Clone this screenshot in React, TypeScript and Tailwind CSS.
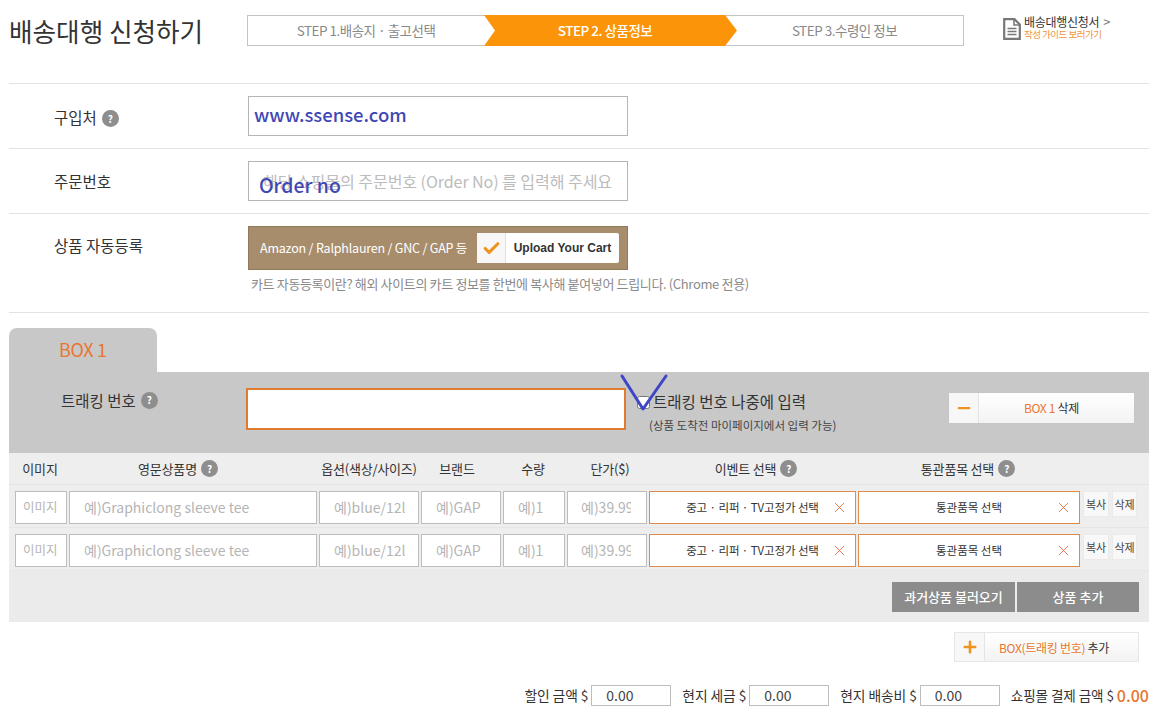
import { X, Check, Minus, Plus } from "lucide-react"

const font = "font-['Noto_Sans_CJK_KR','Noto_Sans',sans-serif]"

function Help({ size = "w-4 h-4 text-[10px]" }: { size?: string }) {
  return (
    <span className={`inline-flex items-center justify-center rounded-full bg-[#8e8e8e] text-white font-bold ${size}`}>?</span>
  )
}

function GuideIcon() {
  return (
    <svg width="18" height="22" viewBox="0 0 18 22" fill="none">
      <path d="M1.2 1.2H11.5L16.8 6.5V20.8H1.2Z" stroke="#777" strokeWidth="2.2" fill="#fff" />
      <path d="M11 1.5V7H16.5" stroke="#777" strokeWidth="1.6" />
      <path d="M4.5 10.5H13.5M4.5 13.5H13.5M4.5 16.5H13.5" stroke="#777" strokeWidth="1.6" />
    </svg>
  )
}

function Row({ label, help, h, top = "pt-[21px]", children }: { label: string; help?: boolean; h: string; top?: string; children: React.ReactNode }) {
  return (
    <div className={`flex border-b border-[#e3e3e3] ${h}`}>
      <div className={`w-[239px] pl-[45px] ${top} flex items-start gap-[5px] text-[15.5px] leading-[24px] text-[#333] shrink-0`}>
        <span>{label}</span>
        {help && <span className="mt-[5px] flex"><Help size="w-[17px] h-[17px] text-[10px]" /></span>}
      </div>
      <div className="pt-[12px]">{children}</div>
    </div>
  )
}

const colHeads = [
  { t: "이미지", w: "w-[50px]" },
  { t: "영문상품명", w: "w-[256px] pr-[30px]", help: true },
  { t: "옵션(색상/사이즈)", w: "w-[96px]" },
  { t: "브랜드", w: "w-[80px]" },
  { t: "수량", w: "w-[72px]" },
  { t: "단가($)", w: "w-[82px]" },
  { t: "이벤트 선택", w: "w-[210px]", help: true },
  { t: "통관품목 선택", w: "w-[214px]", help: true },
]

const cellInput =
  "h-[33px] border border-[#bdbdbd] bg-white text-[14px] text-[#555] placeholder:text-[#b5b5b5] outline-none pb-[2px]"

function ItemRow() {
  return (
    <div className="h-[43px] pl-[6px] flex items-start pt-[6px] border-b border-[#e6e6e6]">
      <input placeholder="이미지" className={`${cellInput} w-[52px] pl-[7px] pr-[4px] mr-[2px] !text-[12.5px]`} />
      <input placeholder="예)Graphiclong sleeve tee" className={`${cellInput} w-[248px] pl-[14px] mr-[2px]`} />
      <input placeholder="예)blue/12l" className={`${cellInput} w-[100px] pl-[14px] pr-[12px] mr-[2px]`} />
      <input placeholder="예)GAP" className={`${cellInput} w-[80px] pl-[14px] mr-[2px]`} />
      <input placeholder="예)1" className={`${cellInput} w-[62px] pl-[14px] mr-[2px]`} />
      <input placeholder="예)39.99" className={`${cellInput} w-[80px] pl-[13px] pr-[15px] mr-[2px]`} />
      <div className="w-[207px] h-[33px] mr-[2px] border border-[#e08a4a] bg-white flex items-center text-[11.5px] tracking-[-0.1px] text-[#333]">
        <span className="flex-1 text-center pl-[30px] whitespace-nowrap">중고 · 리퍼 · TV고정가 선택</span>
        <X size={17} strokeWidth={1.2} className="text-[#e0683a] ml-[6px] mr-[7px]" />
      </div>
      <div className="w-[222px] h-[33px] mr-[3px] border border-[#e08a4a] bg-white flex items-center text-[11.5px] text-[#333]">
        <span className="flex-1 text-center pl-[24px]">통관품목 선택</span>
        <X size={17} strokeWidth={1.2} className="text-[#e0683a] mr-[7px]" />
      </div>
      <div className="w-[26px] h-[26px] mr-[3px] bg-[#f8f8f8] border border-[#eaeaea] flex items-center justify-center text-[11px] text-[#444]">복사</div>
      <div className="w-[25px] h-[26px] bg-[#f8f8f8] border border-[#eaeaea] flex items-center justify-center text-[11px] text-[#444]">삭제</div>
    </div>
  )
}

function Money({ label }: { label: string }) {
  return (
    <div className="flex items-center gap-[3px] whitespace-nowrap">
      <span className="text-[13.8px] text-[#333] tracking-[-0.1px]">{label}</span>
      <input readOnly value="0.00" className="w-[80px] h-[21px] border border-[#bdbdbd] bg-white pl-[14px] text-[14px] text-[#444] outline-none" />
    </div>
  )
}

export default function App() {
  return (
    <div className={`${font} w-[1159px] h-[717px] overflow-hidden bg-white pl-[9px] pr-[10px] relative`}>

      {/* HEADER */}
      <div className="h-[84px] border-b border-[#e3e3e3] flex items-start">
        <h1 className="w-[238px] pt-[12px] text-[25.6px] leading-[38px] text-[#333] font-normal shrink-0">배송대행 신청하기</h1>

        <div className="mt-[15px] w-[717px] h-[31px] border border-[#c4c4c4] flex text-[13.5px] tracking-[-0.5px]">
          <div className="w-[236px] flex items-center justify-center text-[#8a8a8a]">STEP 1.배송지 · 출고선택</div>
          <div className="w-[253px] pr-[11px] -my-px h-[31px] bg-[#fb9409] text-white font-medium flex items-center justify-center [clip-path:polygon(0_0,241px_0,100%_50%,241px_100%,0_100%,11px_50%)]">STEP 2. 상품정보</div>
          <div className="flex-1 pr-[11px] flex items-center justify-center text-[#8a8a8a]">STEP 3.수령인 정보</div>
        </div>

        <div className="ml-[39px] mt-[15px] flex items-start gap-[3px]">
          <div className="pt-[3px] flex"><GuideIcon /></div>
          <div className="flex flex-col">
            <div className="flex items-center gap-[4px] text-[12px] leading-[14px] text-[#333] tracking-[-0.3px]">
              배송대행신청서
              <span className="text-[#777] text-[13px] leading-[14px]">&gt;</span>
            </div>
            <div className="text-[9.5px] leading-[10px] text-[#f0953a] tracking-[-0.5px]">작성 가이드 보러가기</div>
          </div>
        </div>
      </div>

      {/* FORM ROWS */}
      <Row label="구입처" help h="h-[65px]">
        <input readOnly value="www.ssense.com" className="w-[380px] h-[40px] border border-[#b5b5b5] pl-[5px] pb-[4px] text-[18.5px] font-medium text-[#3f48b5] outline-none" />
      </Row>

      <Row label="주문번호" top="pt-[20px]" h="h-[65px]">
        <div className="relative">
          <input placeholder="해당 쇼핑몰의 주문번호 (Order No) 를 입력해 주세요" className="w-[380px] h-[40px] border border-[#b5b5b5] pl-[14px] text-[16.1px] tracking-[-0.1px] placeholder:text-[#bcbcbc] outline-none" />
          <span className="absolute left-[11px] top-[10px] text-[19.4px] leading-[27px] font-medium text-[#3f48b5]">Order no</span>
        </div>
      </Row>

      <Row label="상품 자동등록" top="pt-[19px]" h="h-[99px]">
        <div className="w-[380px] h-[44px] border border-[#8f7a60] bg-[#a88d6c] flex items-center pl-[11px]">
          <span className="w-[217px] text-[12.5px] text-white tracking-[-0.2px] whitespace-nowrap">Amazon / Ralphlauren / GNC / GAP 등</span>
          <div className="w-[142px] h-[30px] rounded-[2px] bg-white flex items-center">
            <div className="w-[29px] h-full flex items-center justify-center bg-[#f7f7f7] border-r border-[#e2e2e2]">
              <Check size={19} strokeWidth={4} className="text-[#f0921e]" />
            </div>
            <span className="flex-1 text-center text-[12px] font-bold text-[#333] font-['Liberation_Sans',sans-serif]">Upload Your Cart</span>
          </div>
        </div>
        <p className="mt-[4px] pl-[3px] text-[13px] leading-[20px] text-[#8a8a8a] tracking-[-0.35px] whitespace-nowrap">
          카트 자동등록이란? 해외 사이트의 카트 정보를 한번에 복사해 붙여넣어 드립니다. (Chrome 전용)
        </p>
      </Row>

      {/* BOX TAB */}
      <div className="mt-[15px] w-[148px] h-[44px] rounded-t-[8px] bg-[#c8c8c8] pl-[50px] pt-[6px] text-[18px] leading-[30px] text-[#e8762e] tracking-[-0.3px]">BOX 1</div>

      {/* TRACKING */}
      <div className="h-[81px] bg-[#c8c8c8] flex items-start relative">
        <div className="w-[237px] pl-[52px] pt-[16px] flex items-center gap-[5px] text-[15.5px] leading-[24px] text-[#333] shrink-0">
          트래킹 번호 <Help size="w-[17px] h-[17px] text-[10px]" />
        </div>
        <input className="mt-[16px] w-[380px] h-[42px] border-2 border-[#e07c32] bg-white outline-none shrink-0" />
        <div className="ml-[10px] pt-[18px] w-[313px] shrink-0">
          <div className="flex items-center gap-[3px] text-[15.5px] leading-[22px] text-[#333]">
            <input type="checkbox" className="w-[13px] h-[13px] mt-[3px] ml-[1px]" />
            트래킹 번호 나중에 입력
          </div>
          <div className="pl-[13px] mt-[4px] text-[11.5px] leading-[18px] text-[#444]">(상품 도착전 마이페이지에서 입력 가능)</div>
        </div>
        <div className="mt-[21px] w-[185px] h-[30px] bg-white flex items-center shadow-[0_0_1px_#bbb] shrink-0">
          <div className="w-[30px] h-full flex items-center justify-center border-r border-[#e4e4e4] bg-[#f7f7f7]">
            <Minus size={18} strokeWidth={3} className="text-[#f0921e]" />
          </div>
          <div className="flex-1 pr-[10px] text-center text-[12px] tracking-[-0.3px] text-[#333] bg-gradient-to-b from-white to-[#f3f3f3] h-full leading-[30px]">
            <span className="text-[#e8762e]">BOX 1</span> 삭제
          </div>
        </div>
      </div>

      {/* TABLE */}
      <div className="bg-[#eeeeee]">
        <div className="h-[32px] pl-[6px] flex items-center border-b border-[#e3e3e3]">
          {colHeads.map((c) => (
            <div key={c.t} className={`${c.w} flex items-center justify-center gap-[4px] text-[13px] text-[#333] tracking-[-0.2px] whitespace-nowrap`}>
              {c.t}
              {c.help && <Help size="w-[17px] h-[17px] text-[10px]" />}
            </div>
          ))}
        </div>
        <ItemRow />
        <ItemRow />
        <div className="h-[51px] flex justify-end items-start pt-[11px] pr-[10px] gap-[2px] bg-[#ebebeb]">
          <div className="w-[123px] h-[30px] bg-[#8c8c8c] text-white text-[13px] font-medium flex items-center justify-center">과거상품 불러오기</div>
          <div className="w-[122px] h-[30px] bg-[#8c8c8c] text-white text-[13px] font-medium flex items-center justify-center">상품 추가</div>
        </div>
      </div>

      {/* ADD BOX */}
      <div className="flex justify-end pr-[10px] mt-[10px]">
        <div className="w-[185px] h-[30px] bg-white flex items-center border border-[#e6e6e6]">
          <div className="w-[30px] h-full flex items-center justify-center border-r border-[#e4e4e4] bg-[#f7f7f7]">
            <Plus size={18} strokeWidth={3.4} className="text-[#f0921e]" />
          </div>
          <div className="flex-1 pl-[14px] text-[12px] tracking-[-0.3px] text-[#333] bg-gradient-to-b from-white to-[#f3f3f3] h-full leading-[30px]">
            <span className="text-[#e8762e]">BOX(트래킹 번호)</span> 추가
          </div>
        </div>
      </div>

      {/* TOTALS */}
      <div className="mt-[22px] flex justify-end items-center h-[22px] gap-[11px]">
        <Money label="할인 금액 $" />
        <Money label="현지 세금 $" />
        <Money label="현지 배송비 $" />
        <div className="flex items-center gap-[3px] whitespace-nowrap">
          <span className="text-[13.6px] text-[#333] tracking-[-0.1px]">쇼핑몰 결제 금액 $</span>
          <span className="text-[16px] font-medium text-[#e8762e]">0.00</span>
        </div>
      </div>

      {/* hand-drawn check mark over the screenshot */}
      <svg className="absolute left-[619px] top-[372px] pointer-events-none" width="50" height="42" viewBox="0 0 50 42" fill="none">
        <path d="M3 4L24 37L47 4" stroke="#3f45c8" strokeWidth="3" strokeLinecap="round" strokeLinejoin="round" />
      </svg>
    </div>
  )
}
